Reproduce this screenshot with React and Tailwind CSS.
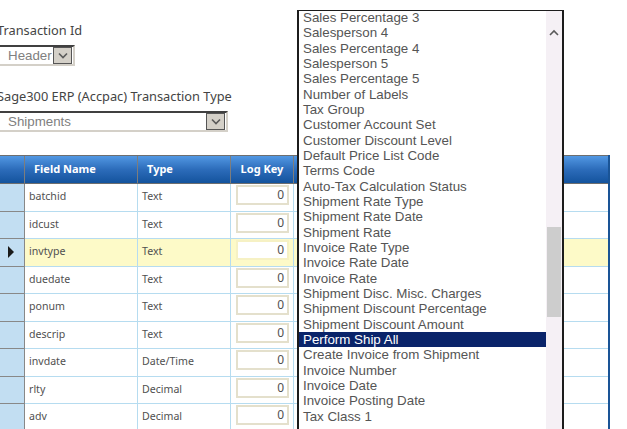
import React from 'react';

const rows = [
    ['batchid', 'Text'],
    ['idcust', 'Text'],
    ['invtype', 'Text'],
    ['duedate', 'Text'],
    ['ponum', 'Text'],
    ['descrip', 'Text'],
    ['invdate', 'Date/Time'],
    ['rlty', 'Decimal'],
    ['adv', 'Decimal'],
];

const options = [
    'Sales Percentage 3',
    'Salesperson 4',
    'Sales Percentage 4',
    'Salesperson 5',
    'Sales Percentage 5',
    'Number of Labels',
    'Tax Group',
    'Customer Account Set',
    'Customer Discount Level',
    'Default Price List Code',
    'Terms Code',
    'Auto-Tax Calculation Status',
    'Shipment Rate Type',
    'Shipment Rate Date',
    'Shipment Rate',
    'Invoice Rate Type',
    'Invoice Rate Date',
    'Invoice Rate',
    'Shipment Disc. Misc. Charges',
    'Shipment Discount Percentage',
    'Shipment Discount Amount',
    'Perform Ship All',
    'Create Invoice from Shipment',
    'Invoice Number',
    'Invoice Date',
    'Invoice Posting Date',
    'Tax Class 1',
];

function Chevron({ up }) {
    return (
        <svg width="10" height="7" viewBox="0 0 10 7">
            <path d={up ? 'M1 6 L5 2 L9 6' : 'M1 1.5 L5 5.5 L9 1.5'} fill="none" stroke="#5a5a5a" strokeWidth="1.6" />
        </svg>
    );
}

function Select({ value, width }) {
    return (
        <div className={`flex h-[21px] ${width} items-center border-t-2 border-r-2 border-b-2 border-t-[#404040] border-r-[#d4d0c8] border-b-[#d4d0c8] bg-white`}>
            <span className="flex-1 pl-[8px] font-['Liberation_Sans',Arial,sans-serif] text-[13.33px] leading-none text-[#808080]">{value}</span>
            <span className="mr-[1px] flex h-[17px] w-[19px] items-center justify-center border border-[#555] bg-[#d4d0c8]">
                <Chevron />
            </span>
        </div>
    );
}

export default function App() {
    return (
        <div className="relative h-[429px] w-[627px] overflow-hidden bg-white font-['Noto_Sans',sans-serif]">
            <div className="pt-[22px]">
                <div className="-ml-[3px] h-4 text-[12.8px] leading-4 text-[#444]">Transaction Id</div>
                <div className="mt-[7px]">
                    <Select value="Header" width="w-[75px]" />
                </div>
                <div className="-ml-[3px] mt-[22px] h-4 text-[12.8px] leading-4 text-[#444]">Sage300 ERP (Accpac) Transaction Type</div>
                <div className="mt-[7px]">
                    <Select value="Shipments" width="w-[228px]" />
                </div>

                {/* grid */}
                <div className="mt-[23px] w-[610px] border-r-2 border-[#1a5496]">
                    <div className="flex h-[29px] border-t border-b border-[#6e6e6e] bg-gradient-to-b from-[#5298e3] via-[#2c6cba] to-[#13539d] text-[11px] font-bold text-white">
                        <div className="w-[25px] border-r border-[#7d7d7d]" />
                        <div className="flex w-[113px] items-center border-r border-[#7d7d7d] pl-[9px]">Field Name</div>
                        <div className="flex w-[93px] items-center border-r border-[#7d7d7d] pl-[9px]">Type</div>
                        <div className="flex w-[63px] items-center justify-center border-r border-[#7d7d7d]">Log Key</div>
                        <div className="flex-1" />
                    </div>
                    {rows.map(([name, type]) => {
                        const sel = name === 'invtype';
                        return (
                            <div key={name} className={`flex h-[27.5px] text-[10.6px] text-[#505050] ${sel ? 'bg-[#fdfac8]' : 'bg-white'}`}>
                                <div className="flex w-[25px] items-center justify-center border-r border-b border-[#888] bg-[#c2def2]">
                                    {sel && (
                                        <svg width="7" height="12" viewBox="0 0 7 12" className="-ml-[2px]">
                                            <polygon points="0,0 6,6 0,12" fill="#1a1a1a" />
                                        </svg>
                                    )}
                                </div>
                                <div className="flex w-[113px] items-center border-r border-b border-[#b6dcf0] pl-[4px]">{name}</div>
                                <div className="flex w-[93px] items-center border-r border-b border-[#b6dcf0] pl-[4px]">{type}</div>
                                <div className="w-[63px] border-r border-b border-[#b6dcf0] pt-[1px] pl-[5px]">
                                    <div className={`flex h-[20px] w-[53px] items-center justify-end border-2 pr-[3px] text-[12px] ${sel ? 'border-[#f6f1c4] bg-white' : 'border-[#e4e0cc] bg-white'}`}>0</div>
                                </div>
                                <div className="flex-1 border-b border-[#b6dcf0]" />
                            </div>
                        );
                    })}
                </div>
            </div>

            {/* open dropdown list */}
            <div className="absolute top-[10px] left-[297px] flex h-[440px] w-[267px] border-x-2 border-t border-[#1c1c1c] bg-white">
                <div className="flex-1 overflow-hidden font-['Liberation_Sans',Arial,sans-serif] text-[13.33px] leading-[15.33px] text-[#555]">
                    <div className="-mt-[1px]">
                        {options.map((o) => (
                            <div key={o} className={`h-[15.33px] pl-[4px] whitespace-nowrap ${o === 'Perform Ship All' ? 'bg-[#0a246a] text-white' : ''}`}>{o}</div>
                        ))}
                    </div>
                </div>
                <div className="flex w-[16px] flex-col items-center bg-[#f5f0f5]">
                    <div className="mt-[18px]">
                        <Chevron up />
                    </div>
                    <div className="mt-[191px] h-[90px] w-[14px] bg-[#cdcdcd]" />
                </div>
            </div>
        </div>
    );
}
